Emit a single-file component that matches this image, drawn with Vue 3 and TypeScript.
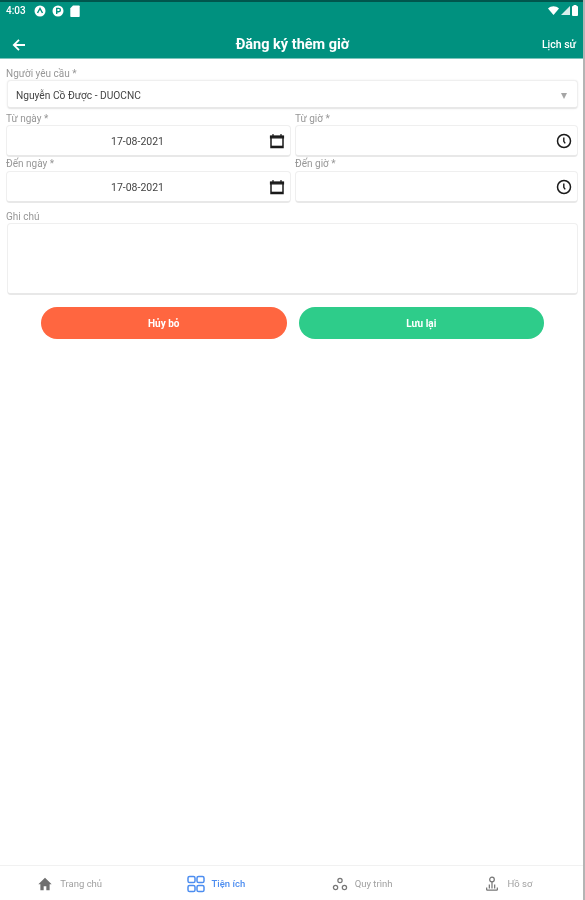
<script setup lang="ts">
interface NavItem { label: string; icon: string; active?: boolean }
const navItems: NavItem[] = [
  { label: 'Trang chủ', icon: 'home' },
  { label: 'Tiện ích', icon: 'grid', active: true },
  { label: 'Quy trình', icon: 'flow' },
  { label: 'Hồ sơ', icon: 'profile' },
]
</script>

<template>
  <div class="screen">
    <header class="top">
      <div class="status">
        <div class="status-left">
          <span class="time">4:03</span>
          <svg class="st" viewBox="0 0 12 12"><circle cx="6" cy="6" r="5.5" fill="#fff"/><path d="M3.5 8 6 3.5 8.5 8" fill="none" stroke="#00917f" stroke-width="1.4"/></svg>
          <svg class="st" viewBox="0 0 12 12"><circle cx="6" cy="6" r="5.5" fill="#fff"/><path d="M4.7 9V3.4h2a1.6 1.6 0 0 1 0 3.4h-2" fill="none" stroke="#00917f" stroke-width="1.4"/></svg>
          <svg class="st sd" viewBox="0 0 10 12"><path d="M3 .5h6a.7.7 0 0 1 .7.7v10a.7.7 0 0 1-.7.7H1a.7.7 0 0 1-.7-.7V3.2z" fill="#fff"/></svg>
        </div>
        <div class="status-right">
          <svg width="11" height="9" viewBox="0 0 11 9"><path d="M0 2.4C3.2-.6 7.8-.6 11 2.4L5.5 9z" fill="#fff"/></svg>
          <svg width="9" height="9" viewBox="0 0 9 9"><path d="M9 0v9H0z" fill="#fff" opacity=".85"/></svg>
          <svg width="6" height="11" viewBox="0 0 6 11"><rect y="1" width="6" height="10" rx="1" fill="#fff"/><rect x="1.5" width="3" height="2" fill="#fff"/></svg>
        </div>
      </div>
      <div class="bar">
        <svg class="back" viewBox="0 0 14 14"><path d="M13 7H2M7 1.8 1.8 7 7 12.2" fill="none" stroke="#fff" stroke-width="1.8"/></svg>
        <h1>Đăng ký thêm giờ</h1>
        <span class="history">Lịch sử</span>
      </div>
    </header>

    <main class="form">
      <div class="field first">
        <label>Người yêu cầu *</label>
        <div class="box select">
          <span class="select-value">Nguyễn Cồ Được - DUOCNC</span>
          <span class="caret"></span>
        </div>
      </div>

      <div class="pair">
        <div class="field">
          <label>Từ ngày *</label>
          <div class="box tall date">
            <span>17-08-2021</span>
            <svg class="ic" viewBox="0 0 16 16"><path d="M2 3.5h12v11H2z" fill="none" stroke="#1a1a1a" stroke-width="1.5"/><path d="M1.5 3h13v1.8h-13zM4 1v2M12 1v2" stroke="#1a1a1a" stroke-width="1.2" fill="#1a1a1a"/><path d="M2 13.5h12" stroke="#1a1a1a" stroke-width="1.6"/></svg>
          </div>
        </div>
        <div class="field">
          <label>Từ giờ *</label>
          <div class="box tall time-box">
            <svg class="ic" viewBox="0 0 16 16"><circle cx="8" cy="8" r="6.5" fill="none" stroke="#1a1a1a" stroke-width="1.5"/><path d="M7.8 4.4v4l1.4 2" fill="none" stroke="#1a1a1a" stroke-width="1.4"/></svg>
          </div>
        </div>
      </div>

      <div class="pair second">
        <div class="field">
          <label>Đến ngày *</label>
          <div class="box tall date">
            <span>17-08-2021</span>
            <svg class="ic" viewBox="0 0 16 16"><path d="M2 3.5h12v11H2z" fill="none" stroke="#1a1a1a" stroke-width="1.5"/><path d="M1.5 3h13v1.8h-13zM4 1v2M12 1v2" stroke="#1a1a1a" stroke-width="1.2" fill="#1a1a1a"/><path d="M2 13.5h12" stroke="#1a1a1a" stroke-width="1.6"/></svg>
          </div>
        </div>
        <div class="field">
          <label>Đến giờ *</label>
          <div class="box tall time-box">
            <svg class="ic" viewBox="0 0 16 16"><circle cx="8" cy="8" r="6.5" fill="none" stroke="#1a1a1a" stroke-width="1.5"/><path d="M7.8 4.4v4l1.4 2" fill="none" stroke="#1a1a1a" stroke-width="1.4"/></svg>
          </div>
        </div>
      </div>

      <div class="field note">
        <label>Ghi chú</label>
        <div class="box area"></div>
      </div>

      <div class="actions">
        <button class="btn cancel">Hủy bỏ</button>
        <button class="btn save">Lưu lại</button>
      </div>
    </main>

    <nav class="nav">
      <div v-for="item in navItems" :key="item.label" class="nav-item" :class="{ active: item.active }">
        <svg v-if="item.icon === 'home'" class="nav-ic" viewBox="0 0 18 18"><path d="M9 2 1.5 9.2h2.3V16h3.7v-4.6h3V16h3.7V9.2h2.3z" fill="#6f6f6f"/></svg>
        <svg v-else-if="item.icon === 'grid'" class="nav-ic grid" viewBox="0 0 18 18" fill="none" stroke="#4c8df0" stroke-width="1.5"><rect x="1" y="1.5" width="7" height="6" rx="1.6"/><rect x="10" y="1.5" width="7" height="6" rx="1.6"/><rect x="1" y="10.5" width="7" height="6" rx="1.6"/><rect x="10" y="10.5" width="7" height="6" rx="1.6"/></svg>
        <svg v-else-if="item.icon === 'flow'" class="nav-ic" viewBox="0 0 18 18" fill="none" stroke="#777" stroke-width="1.4"><circle cx="9" cy="5" r="2.4"/><circle cx="4" cy="13" r="2.4"/><circle cx="14" cy="13" r="2.4"/></svg>
        <svg v-else class="nav-ic" viewBox="0 0 18 18" fill="none" stroke="#777" stroke-width="1.4"><circle cx="9" cy="4" r="2.6"/><path d="M9 6.6V14M6 9.5v4.5M12 9.5v4.5M3 16h12M3 16v-3M15 16v-3"/></svg>
        <span>{{ item.label }}</span>
      </div>
    </nav>
  </div>
</template>

<style>
body { background: #fff; }
</style>

<style scoped>
.screen {
  width: 585px;
  height: 900px;
  position: relative;
  display: flex;
  flex-direction: column;
  background: #fff;
  overflow: hidden;
  font-family: Roboto, "Liberation Sans", sans-serif;
  filter: blur(0.5px);
}
.screen::after {
  content: "";
  position: absolute;
  top: 0;
  right: 0;
  bottom: 0;
  width: 2px;
  background: #b4b4b4;
}
.top {
  background: #00917f;
  height: 59px;
  flex: none;
  border-top: 2px solid #00564d;
  border-bottom: 1px solid #7cc4bb;
  box-sizing: border-box;
  color: #fff;
}
.status {
  height: 17px;
  display: flex;
  align-items: center;
  justify-content: space-between;
  padding: 0 7px 0 6px;
}
.status-left, .status-right { display: flex; align-items: center; }
.status-left { gap: 6px; }
.status-right { gap: 2px; }
.time { font-size: 10px; font-weight: 500; width: 22px; }
.st { width: 12px; height: 12px; }
.st.sd { width: 10px; }
.bar {
  height: 39px;
  position: relative;
  display: flex;
  align-items: center;
  justify-content: space-between;
  padding: 12px 9px 0 12px;
  box-sizing: border-box;
}
.back { width: 14px; height: 14px; }
.bar h1 {
  position: absolute;
  left: 0;
  right: 0;
  margin: 0;
  text-align: center;
  font-size: 14.5px;
  font-weight: 700;
}
.history { font-size: 10.5px; font-weight: 500; }
.form {
  flex: 1;
  padding: 0 7px 0 6px;
  box-sizing: border-box;
}
.field label {
  display: block;
  font-size: 10px;
  line-height: 12px;
  color: #979797;
}
.first { padding-top: 9px; }
.box {
  background: #fff;
  border: 1px solid #efefef;
  border-bottom: 2px solid #e8e8e8;
  border-radius: 4px;
  box-sizing: border-box;
  display: flex;
  align-items: center;
}
.select {
  height: 29px;
  margin-left: 1px;
  padding: 3px 10px 0 8px;
  justify-content: space-between;
  box-shadow: 0 0 2px rgba(0, 0, 0, 0.08);
}
.select-value { font-size: 10.2px; color: #444; }
.caret {
  width: 0;
  height: 0;
  border-left: 3.5px solid transparent;
  border-right: 3.5px solid transparent;
  border-top: 6px solid #a5a5a5;
}
.pair {
  display: grid;
  grid-template-columns: 285px 283px;
  gap: 4px;
  margin-top: 4px;
}
.pair.second { margin-top: 1px; }
.pair.second label { margin-bottom: 1px; }
.tall { height: 32px; position: relative; padding-top: 1px; }
.date { justify-content: center; padding-right: 30px; }
.date span { font-size: 10.5px; color: #444; padding-left: 8px; }
.time-box { justify-content: flex-end; }
.ic { width: 16px; height: 16px; position: absolute; right: 5px; top: 7px; }
.note { margin-top: 8px; }
.area { height: 72px; margin-left: 1px; }
.actions {
  display: flex;
  gap: 12px;
  margin: 12px 34px 0 35px;
}
.btn {
  flex: 1;
  height: 32px;
  border: none;
  border-radius: 16px;
  color: #fff;
  font: 700 10px Roboto, "Liberation Sans", sans-serif;
}
.cancel { background: #ff6640; }
.save { background: #2ecc8a; }
.nav {
  flex: none;
  height: 35px;
  border-top: 1px solid #f1f1f1;
  display: grid;
  grid-template-columns: repeat(4, 1fr);
  padding-top: 1px;
  box-sizing: border-box;
}
.nav-item {
  display: flex;
  align-items: center;
  justify-content: center;
  gap: 7px;
  padding-right: 7px;
  font-size: 9.5px;
  color: #a0a0a0;
}
.nav-item.active { color: #4c8df0; font-weight: 500; }
.nav-ic { width: 16px; height: 16px; }
.nav-ic.grid { width: 18px; height: 18px; }
</style>
